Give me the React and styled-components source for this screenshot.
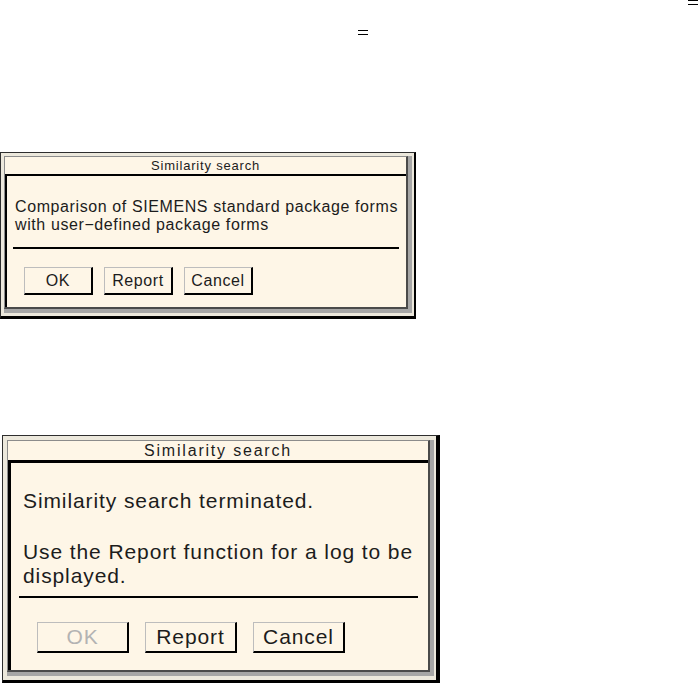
import React from "react";
import styled, { createGlobalStyle } from "styled-components";

const Global = createGlobalStyle`
  html, body { margin: 0; padding: 0; background: #ffffff; }
  * { box-sizing: border-box; }
`;

const SIZES = {
  small: {
    width: 416, x: 0,
    frameBorder: "1px 2px 3px 1px", framePad: "3px 2px 3px 3px",
    titleH: 19, titleRule: 2, titleFont: 13, titleSpacing: 0.8,
    bodyRule: 2, bodyPad: "22px 7px 12px 6px", textInset: 2,
    font: 16, spacing: 0.6, line: 18, paraGap: 0,
    sepGap: 13, btnGap: 18, btnInset: 11,
    btnW: 69, btnH: 28, btnSpace: 11,
  },
  large: {
    width: 438, x: 2,
    frameBorder: "1px 4px 3px 1px", framePad: "4px 2px 4px 4px",
    titleH: 22, titleRule: 3, titleFont: 16, titleSpacing: 1.8,
    bodyRule: 3, bodyPad: "26px 10px 17px 8px", textInset: 4,
    font: 21, spacing: 0.9, line: 24, paraGap: 27,
    sepGap: 8, btnGap: 24, btnInset: 18,
    btnW: 92, btnH: 31, btnSpace: 16,
  },
};

const Page = styled.div`
  position: relative;
  width: 698px;
  height: 688px;
  overflow: hidden;
  display: flex;
  flex-direction: column;
  align-items: flex-start;
  padding-top: 152px;
  gap: 116px;
  font-family: "Liberation Sans", Arial, Helvetica, sans-serif;
  color: #1c1c1c;
`;

const Mark = styled.span`
  position: absolute;
  left: ${(p) => p.$x}px;
  top: ${(p) => p.$y}px;
  width: 10px;
  height: 5px;
  border-top: 1px solid #000;
  border-bottom: 1px solid #000;
`;

const Frame = styled.div`
  width: ${(p) => p.$s.width}px;
  margin-left: ${(p) => p.$s.x}px;
  background: #ece8dc;
  border-style: solid;
  border-color: #2e2e2e #000 #000 #2e2e2e;
  border-width: ${(p) => p.$s.frameBorder};
  padding: ${(p) => p.$s.framePad};
`;

const Groove = styled.div`
  border-right: 4px solid #a6a6a6;
  border-bottom: 4px solid #a6a6a6;
`;

const Column = styled.div`
  border-style: solid;
  border-width: 1px 2px 2px 1px;
  border-color: #8c8c8c #4a4a4a #4a4a4a #8c8c8c;
  background: #fef6e7;
`;

const TitleBar = styled.div`
  height: ${(p) => p.$s.titleH}px;
  display: flex;
  align-items: center;
  justify-content: center;
  border-bottom: ${(p) => p.$s.titleRule}px solid #000;
  font-size: ${(p) => p.$s.titleFont}px;
  letter-spacing: ${(p) => p.$s.titleSpacing}px;
  line-height: 1;
`;

const Body = styled.div`
  border-left: ${(p) => p.$s.bodyRule}px solid #000;
  padding: ${(p) => p.$s.bodyPad};
  display: flex;
  flex-direction: column;
`;

const Message = styled.div`
  padding-left: ${(p) => p.$s.textInset}px;
  font-size: ${(p) => p.$s.font}px;
  line-height: ${(p) => p.$s.line}px;
  letter-spacing: ${(p) => p.$s.spacing}px;
  display: flex;
  flex-direction: column;
  gap: ${(p) => p.$s.paraGap}px;
`;

const Para = styled.p`
  margin: 0;
  white-space: nowrap;
`;

const Separator = styled.div`
  margin-top: ${(p) => p.$s.sepGap}px;
  height: 2px;
  background: #000;
`;

const ButtonRow = styled.div`
  margin-top: ${(p) => p.$s.btnGap}px;
  padding-left: ${(p) => p.$s.btnInset}px;
  display: flex;
  gap: ${(p) => p.$s.btnSpace}px;
`;

const Button = styled.button`
  width: ${(p) => p.$s.btnW}px;
  height: ${(p) => p.$s.btnH}px;
  padding: 0;
  margin: 0;
  background: #fef6e7;
  border-style: solid;
  border-width: 1px 2px 2px 1px;
  border-color: #bdbdbd #000 #000 #bdbdbd;
  font-family: inherit;
  font-size: ${(p) => p.$s.font}px;
  letter-spacing: ${(p) => p.$s.spacing}px;
  color: ${(p) => (p.disabled ? "#b3b3b3" : "#1c1c1c")};
  display: flex;
  align-items: center;
  justify-content: center;
`;

function Dialog({ size, paragraphs, okDisabled }) {
  const s = SIZES[size];
  return (
    <Frame $s={s}>
      <Groove>
        <Column>
          <TitleBar $s={s}>Similarity search</TitleBar>
          <Body $s={s}>
            <Message $s={s}>
              {paragraphs.map((p, i) => (
                <Para key={i}>{p}</Para>
              ))}
            </Message>
            <Separator $s={s} />
            <ButtonRow $s={s}>
              <Button $s={s} disabled={okDisabled}>OK</Button>
              <Button $s={s}>Report</Button>
              <Button $s={s}>Cancel</Button>
            </ButtonRow>
          </Body>
        </Column>
      </Groove>
    </Frame>
  );
}

export default function App() {
  return (
    <>
      <Global />
      <Page>
        <Mark $x={358} $y={30} />
        <Mark $x={688} $y={0} />
        <Dialog
          size="small"
          paragraphs={[
            <>
              Comparison of SIEMENS standard package forms
              <br />
              with user−defined package forms
            </>,
          ]}
        />
        <Dialog
          size="large"
          okDisabled
          paragraphs={[
            "Similarity search terminated.",
            <>
              Use the Report function for a log to be
              <br />
              displayed.
            </>,
          ]}
        />
      </Page>
    </>
  );
}
